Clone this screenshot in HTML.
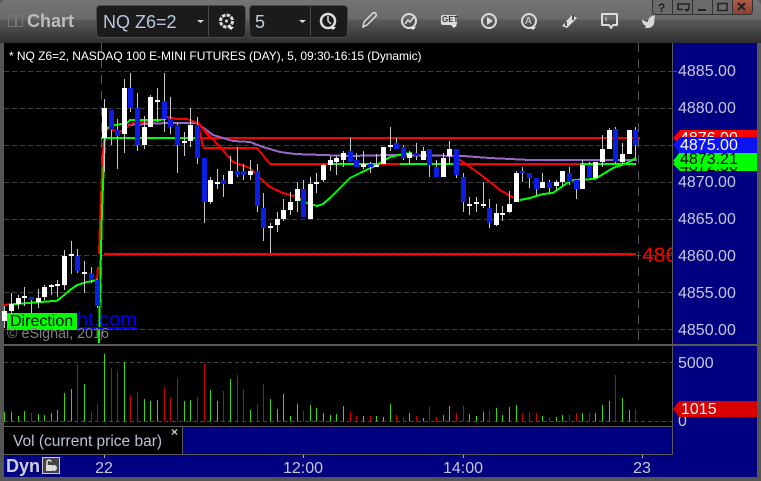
<!DOCTYPE html>
<html><head><meta charset="utf-8"><style>
html,body{margin:0;padding:0;width:761px;height:481px;overflow:hidden;background:#555;font-family:"Liberation Sans",sans-serif}
.a{position:absolute}
.t{position:absolute;white-space:nowrap;line-height:1}
.p{font-size:16px;color:#c6c6dc;left:678px}
.x{font-size:16px;color:#c6c6dc;transform:translateX(-50%)}
.tag{position:absolute;left:673px;width:84px;overflow:hidden;font-size:16px;line-height:16px}
.tag span{position:absolute;left:7px}
</style></head><body>
<div class="a" style="left:0;top:0;width:761px;height:43px;background:linear-gradient(#747474 0,#6a6a6a 19px,#5a5a5a 20px,#2e2e2e 43px);border-radius:5px 5px 0 0"></div>
<div class="a" style="left:0;top:43px;width:4px;height:438px;background:#555"></div>
<div class="a" style="left:4px;top:43px;width:669px;height:384px;background:#000"></div>
<div class="a" style="left:673px;top:43px;width:84px;height:434px;background:#000080"></div>
<div class="a" style="left:4px;top:427px;width:179px;height:27px;background:#000"></div>
<div class="a" style="left:183px;top:427px;width:489px;height:27px;background:#000080"></div>
<div class="a" style="left:4px;top:455px;width:753px;height:22px;background:#000080"></div>

<svg id="c" class="a" style="left:0;top:0" width="761" height="481" viewBox="0 0 761 481" xmlns="http://www.w3.org/2000/svg"></svg>

<div class="a" style="left:4px;top:344px;width:753px;height:2px;background:#5a5a5a"></div>
<div class="a" style="left:672px;top:43px;width:1px;height:412px;background:#5a5a5a"></div>
<div class="a" style="left:4px;top:426px;width:668px;height:1px;background:#5a5a5a"></div>
<div class="a" style="left:182px;top:426px;width:1px;height:28px;background:#5a5a5a"></div>
<div class="a" style="left:4px;top:454px;width:669px;height:1px;background:#5a5a5a"></div>

<!-- toolbar -->
<div class="a" style="left:8px;top:14px;width:6px;height:11px;border:1px solid #777"></div>
<div class="a" style="left:16px;top:14px;width:5px;height:11px;border:1px solid #777"></div>
<div class="t" style="left:27px;top:12px;font-size:18px;font-weight:bold;color:#b9bcc0">Chart</div>
<div class="a" style="left:96px;top:5px;width:148px;height:31px;background:#1b1b1b;border:1px solid #4a4a4a;border-radius:4px"></div>
<div class="a" style="left:208px;top:6px;width:1px;height:30px;background:#4a4a4a"></div>
<div class="a" style="left:249px;top:5px;width:97px;height:31px;background:#1b1b1b;border:1px solid #4a4a4a;border-radius:4px"></div>
<div class="a" style="left:310px;top:6px;width:1px;height:30px;background:#4a4a4a"></div>
<div class="t" style="left:103px;top:13px;font-size:18px;color:#b8c6dc">NQ Z6=2</div>
<div class="t" style="left:255px;top:13px;font-size:18px;color:#c4ccd8">5</div>

<svg class="a" style="left:0;top:0" width="761" height="43" viewBox="0 0 761 43" fill="none" stroke="#dcdcdc" stroke-width="2" xmlns="http://www.w3.org/2000/svg">
<path d="M197 20h7l-3.500 3zM299 20h7l-3.500 3z" fill="#ddd" stroke="none"/>
<circle cx="226.500" cy="21" r="6" stroke-width="3" stroke-dasharray="3.500 1.200"/><circle cx="226.500" cy="21" r="1.500" fill="#ddd" stroke="none"/>
<path d="M228 27h6l-3 3z" fill="#eee" stroke="none"/>
<circle cx="328" cy="21" r="7" stroke-width="2.500"/><path d="M328 16v5l3 3" stroke-width="1.500"/>
<path d="M330 27h6l-3 3z" fill="#eee" stroke="none"/>
<path d="M363 27l1-5 9-9c2-1 4 1 3 3l-9 9z" stroke-width="1.500"/>
<circle cx="409" cy="21" r="7" stroke-width="2"/><path d="M405 24l3-4 2 2 4-5" stroke-width="1.500"/>
<path d="M410 27h6l-3 3z" fill="#eee" stroke="none"/>
<rect x="441" y="15" width="16" height="10" rx="2" fill="#dcdcdc" stroke="none"/>
<path d="M451 25h6l-3 3z" fill="#eee" stroke="none"/>
<circle cx="489" cy="21" r="7"/><path d="M487 17l6 4-6 4z" fill="#dcdcdc" stroke="none"/>
<circle cx="529" cy="21" r="7"/><path d="M530 27h6l-3 3z" fill="#eee" stroke="none"/>
<path d="M562 26l10-11 5 3-10 10z" fill="#dcdcdc" stroke="none"/><path d="M566 26v-4M573 15v5" stroke="#222" stroke-width="1.500"/>
<path d="M602 14h15v11h-4l-2 3-2-3h-7z" stroke-width="2" stroke-linejoin="round"/><path d="M606 17v4" stroke-width="1"/>
<path d="M642 19c2 2 4 3 6 3 0-3 2-6 5-6l2-1-1 9c-1 2-3 4-6 4h-3l1-2c-3-1-4-4-4-7z" fill="#d8d8d8" stroke="none"/>
</svg>
<div class="t" style="left:442px;top:16px;font-size:8px;font-weight:bold;color:#333;letter-spacing:0">GET</div>
<div class="t" style="left:525px;top:17px;font-size:10px;color:#ddd">A</div>

<!-- window buttons -->
<div class="a" style="left:652px;top:0;width:80px;height:14px;background:#6a6a6a;border:1px solid #333;border-top:0;border-radius:0 0 0 4px"></div>
<div class="a" style="left:732px;top:0;width:19px;height:14px;background:linear-gradient(#b05a48,#8e4232);border:1px solid #333;border-top:0;border-radius:0 0 4px 0"></div>
<div class="a" style="left:672px;top:0;width:1px;height:14px;background:#333"></div>
<div class="a" style="left:692px;top:0;width:1px;height:14px;background:#333"></div>
<div class="a" style="left:712px;top:0;width:1px;height:14px;background:#333"></div>
<div class="t" style="left:658px;top:2px;font-size:12px;font-weight:bold;color:#222">?</div>
<svg class="a" style="left:652px;top:0" width="100" height="15" viewBox="0 0 100 15" fill="none" stroke="#222" stroke-width="1.500" xmlns="http://www.w3.org/2000/svg">
<path d="M26 10V4h11v6"/><path d="M26 9.500h5"/><path d="M32 9h6l-3 3z" fill="#222" stroke="none"/>
<path d="M46 10h8" stroke-width="2"/><rect x="66" y="3.500" width="9" height="7"/>
<path d="M86 3l7 7M93 3l-7 7" stroke-width="2.200"/>
</svg>

<!-- legend -->
<div class="t" style="left:9px;top:50px;font-size:12px;letter-spacing:-.045px;color:#fff">* NQ Z6=2, NASDAQ 100 E-MINI FUTURES (DAY), 5, 09:30-16:15 (Dynamic)</div>
<div class="t" style="left:642px;top:245px;width:30px;overflow:hidden;font-size:21px;color:#f00">4860</div>

<div class="t" style="left:77px;top:310px;font-size:20px;color:#00f;text-decoration:underline">ht.com</div>
<div class="a" style="left:7px;top:313px;width:70px;height:17px;background:#0f0"></div>
<div class="t" style="left:10px;top:314px;font-size:16px;color:#000">Direction</div>
<div class="t" style="left:7px;top:327px;font-size:14.300px;color:#808080">© eSignal, 2016</div>

<!-- price axis -->
<div class="t p" style="top:64px">4885.00</div>
<div class="t p" style="top:101px">4880.00</div>
<div class="t p" style="top:175px">4870.00</div>
<div class="t p" style="top:212px">4865.00</div>
<div class="t p" style="top:249px">4860.00</div>
<div class="t p" style="top:286px">4855.00</div>
<div class="t p" style="top:323px">4850.00</div>
<div class="a" style="left:672px;top:71px;width:5px;height:1px;background:#555"></div>

<div class="tag" style="top:130px;height:16px;background:#f00;color:#fff;clip-path:polygon(0 50%,7px 0,100% 0,100% 100%,7px 100%)"><span style="top:1px">4876.00</span></div>
<div class="tag" style="top:157px;height:14px;background:#0f0;color:#000;clip-path:polygon(0 50%,7px 0,100% 0,100% 100%,7px 100%)"><span style="top:2px">4872.50</span></div>
<div class="tag" style="top:152px;height:15px;background:#0f0;color:#000;clip-path:polygon(0 60%,7px 0,100% 0,100% 100%,7px 100%)"><span style="top:0">4873.21</span></div>
<div class="tag" style="top:137px;height:16px;background:#0a14f0;color:#fff;clip-path:polygon(0 50%,7px 0,100% 0,100% 100%,7px 100%)"><span style="top:1px">4875.00</span></div>

<!-- volume axis -->
<div class="t p" style="top:356px">5000</div>
<div class="a" style="left:678px;top:417px;width:12px;height:10px;overflow:hidden"><div class="t" style="left:0;top:-3px;font-size:16px;color:#c6c6dc">0</div></div>
<div class="a" style="left:673px;top:401px;width:84px;height:16px;background:#d80000;clip-path:polygon(0 50%,6px 0,100% 0,100% 100%,6px 100%)"></div>
<div class="t" style="left:681px;top:402px;font-size:16px;color:#fff">1015</div>

<div class="t" style="left:13px;top:434px;font-size:15.500px;color:#b9c2d4">Vol (current price bar)</div>
<div class="t" style="left:171px;top:426px;font-size:12px;font-weight:bold;color:#ccc">×</div>

<!-- bottom -->
<div class="t" style="left:6px;top:457px;font-size:18px;font-weight:bold;color:#d0d0dc">Dyn</div>
<svg class="a" style="left:42px;top:457px" width="18" height="17" viewBox="0 0 18 17" xmlns="http://www.w3.org/2000/svg"><rect x=".5" y=".5" width="17" height="16" fill="#444" stroke="#ccc"/><path d="M5 8V5c0-2.500 4-2.500 4 0" fill="none" stroke="#ddd" stroke-width="1.500"/><rect x="4" y="8" width="6" height="6" fill="#ddd"/><circle cx="12" cy="11" r="3" fill="#ddd"/></svg>
<div class="t x" style="left:104px;top:461px">22</div>
<div class="t x" style="left:303px;top:461px">12:00</div>
<div class="t x" style="left:463px;top:461px">14:00</div>
<div class="t x" style="left:642px;top:461px">23</div>

<script>
var C=[
"w311,321,306,328","w304,311,293,317","w298,304,295,309","w296,298,287,306","b297,300,297,317","w298,302,289,308","w287,297,285,300","w285,287,284,295","w284,286,280,297","w256,285,250,290",
"w254,256,241,274","b256,271,249,273","w272,274,261,293","b273,280,267,283","b280,306,280,308","w108,138,99,172","b110,130,110,145","b130,136,119,169","w88,134,79,153","b88,108,73,112",
"b108,145,93,151","w127,145,116,149","w97,127,95,127","w100,102,88,122","b101,119,73,132","b119,127,97,134","b125,145,123,173","w141,143,132,156","w125,141,108,147","b125,158,117,164",
"b158,202,158,223","w180,202,177,204","w182,184,169,189","b180,184,175,197","w171,184,156,184","b171,175,147,177","b171,175,164,180","w171,175,160,180","b171,206,164,212","b208,228,193,241",
"w226,228,223,253","w219,225,212,232","w210,219,199,221","w202,210,192,215","w189,201,182,212","b189,217,180,217","w184,219,177,219","w182,184,173,193","w165,180,164,182","w160,165,156,171",
"w158,162,156,175","w153,160,151,167","b151,162,138,162","b160,167,153,167","w164,167,151,169","b164,167,162,173","w165,167,154,167","w147,164,147,164","w145,147,127,151","b143,149,138,149",
"b147,158,145,160","w153,158,151,164","b153,156,143,160","w151,160,147,160","b149,165,149,177","b167,177,160,177","w158,177,153,177","w149,156,141,164","b149,175,149,178","b177,202,173,212",
"w204,206,197,215","w202,204,197,212","w204,206,182,208","b208,223,199,228","w213,225,204,226","w213,215,206,221","w204,212,191,213","w173,202,171,202","b171,173,167,182","b173,178,173,188",
"b178,189,178,195","w182,188,173,188","b182,188,180,193","w182,186,180,190","w171,182,171,186","b173,182,167,185","b180,189,180,199","w165,189,160,189","b165,178,162,178","w162,178,162,178",
"w149,162,135,167","w130,149,128,149","b129,162,127,164","w154,162,143,164","w130,154,130,154","b130,145,127,158"];
var V="g216 g216 g228 g213 r219 g222 g225 g219 g210 g159 g147 r72 g132 r216 r192 g42 r84 r93 g66 r165 r156 g177 g183 g180 r141 r171 r114 g183 g180 r171 r72 g150 g183 r153 g117 r105 r147 g210 r192 r132 g177 g207 g162 g228 g192 r213 g195 g204 g219 g225 g222 g198 r216 r228 g228 r228 g228 g231 g192 r225 r231 g219 r228 g234 r201 r231 g225 g198 r219 r198 g222 g228 g216 r210 g204 g225 g201 g195 r219 r216 r219 g228 r231 g231 g225 r225 r219 g219 r219 g219 g195 g183 r105 g174 g210 r207".split(" ");
var s='';
function X(i){return Math.round(4.3+6.642*i)}
function L(d,c,w,extra){s+='<path d="'+d+'" fill="none" stroke="'+c+'" stroke-width="'+(w||2)+'" shape-rendering="crispEdges" '+(extra||'')+'/>'}
var g='';
[71,108,145,182,219,255,292,329].forEach(function(y){g+='M4 '+(y+.5)+'H672'});
L(g,'#3c3c3c',1,'stroke-dasharray="5 3"');
L('M101.500 43V344M638.500 43V344','#555',1,'stroke-dasharray="9 7"');
L('M4 362.500H672M4 421.500H672','#444',1,'stroke-dasharray="4 3"');
L('M104.500 455V458M303.500 455V458M463.500 455V458M642.500 455V458','#aaa',1);
/* long lines */
L('M200 138H640','#f00',2);
L('M104 254H636','#f00',2);
L('M101 138H200','#0f0',2);
L('M333 164H380M400 164H453M580 164H636','#0f0',2);
L('M203 148H257L262 154L270 164H333M380 164H400M453 164H580','#f00',2);
/* purple */
L('M128 125L167 123L197 123L213 135L233 141L250 142L263 147L280 152L295 154L323 155L350 156L390 155L463 156L490 158L530 160L637 160','#9a66cc',2);
/* red moving averages */
L('M4 305L10 304','#f00',2);
L('M97 280L98 267M99 254L100 222L101 198L102 173L103 153L104 140L107 128L113 130L120 132L127 127L133 123L140 122L153 122L160 120L167 117L177 119L187 119L198 123L203 147','#f00',2);
L('M198 123L210 138','#f00',2);
L('M198 123L220 147L233 162L250 168L260 178L270 187L283 193L297 197L303 200','#f00',2);
L('M453 156L457 158L477 172L490 182L500 190L510 196L520 200','#f00',2);
/* green moving averages */
L('M10 304.500L57 300.700L63 296L70 290L77 285L87 282L98 280','#0f0',2);
L('M99 343L100 290L101 250L102 210L104 160L105 135L107 128L115 125L127 123L130 120L160 120L166 119','#0f0',2);
L('M297 198L307 203L317 206L323 204L330 198L340 188L350 178L360 173L377 165L390 157L403 154L412 153','#0f0',2);
L('M520 200L530 198L543 194L553 193L567 183L573 180L595 179L613 168L627 163L636 158','#0f0',2);
/* candles */
var wick='',wb='',bb='';
C.forEach(function(r,i){var t=r[0],v=r.slice(1).split(',').map(Number),x=X(i);
 wick+='M'+(x+.5)+' '+v[2]+'V'+v[3];
 var b='M'+(x-2)+' '+v[0]+'h5V'+v[1]+'h-5z';
 if(t=='w')wb+=b;else bb+=b;});
s+='<path d="'+wick+'" stroke="#c8c8c8" stroke-width="1" fill="none" shape-rendering="crispEdges"/>';
s+='<path d="'+wb+'" fill="#fff" shape-rendering="crispEdges"/>';
s+='<path d="'+bb+'" fill="#0a1ee6" shape-rendering="crispEdges"/>';
/* volume */
var vg='',vr='';
V.forEach(function(r,i){var y=Math.round(340+(+r.slice(1))/3),d='M'+(X(i)+.5)+' '+y+'V421.500';
 if(r[0]=='g')vg+=d;else vr+=d;});
s+='<path d="'+vg+'" stroke="#40d800" stroke-width="1" fill="none" shape-rendering="crispEdges"/>';
s+='<path d="'+vr+'" stroke="#d00000" stroke-width="1" fill="none" shape-rendering="crispEdges"/>';
document.getElementById('c').innerHTML=s;
</script>
</body></html>
